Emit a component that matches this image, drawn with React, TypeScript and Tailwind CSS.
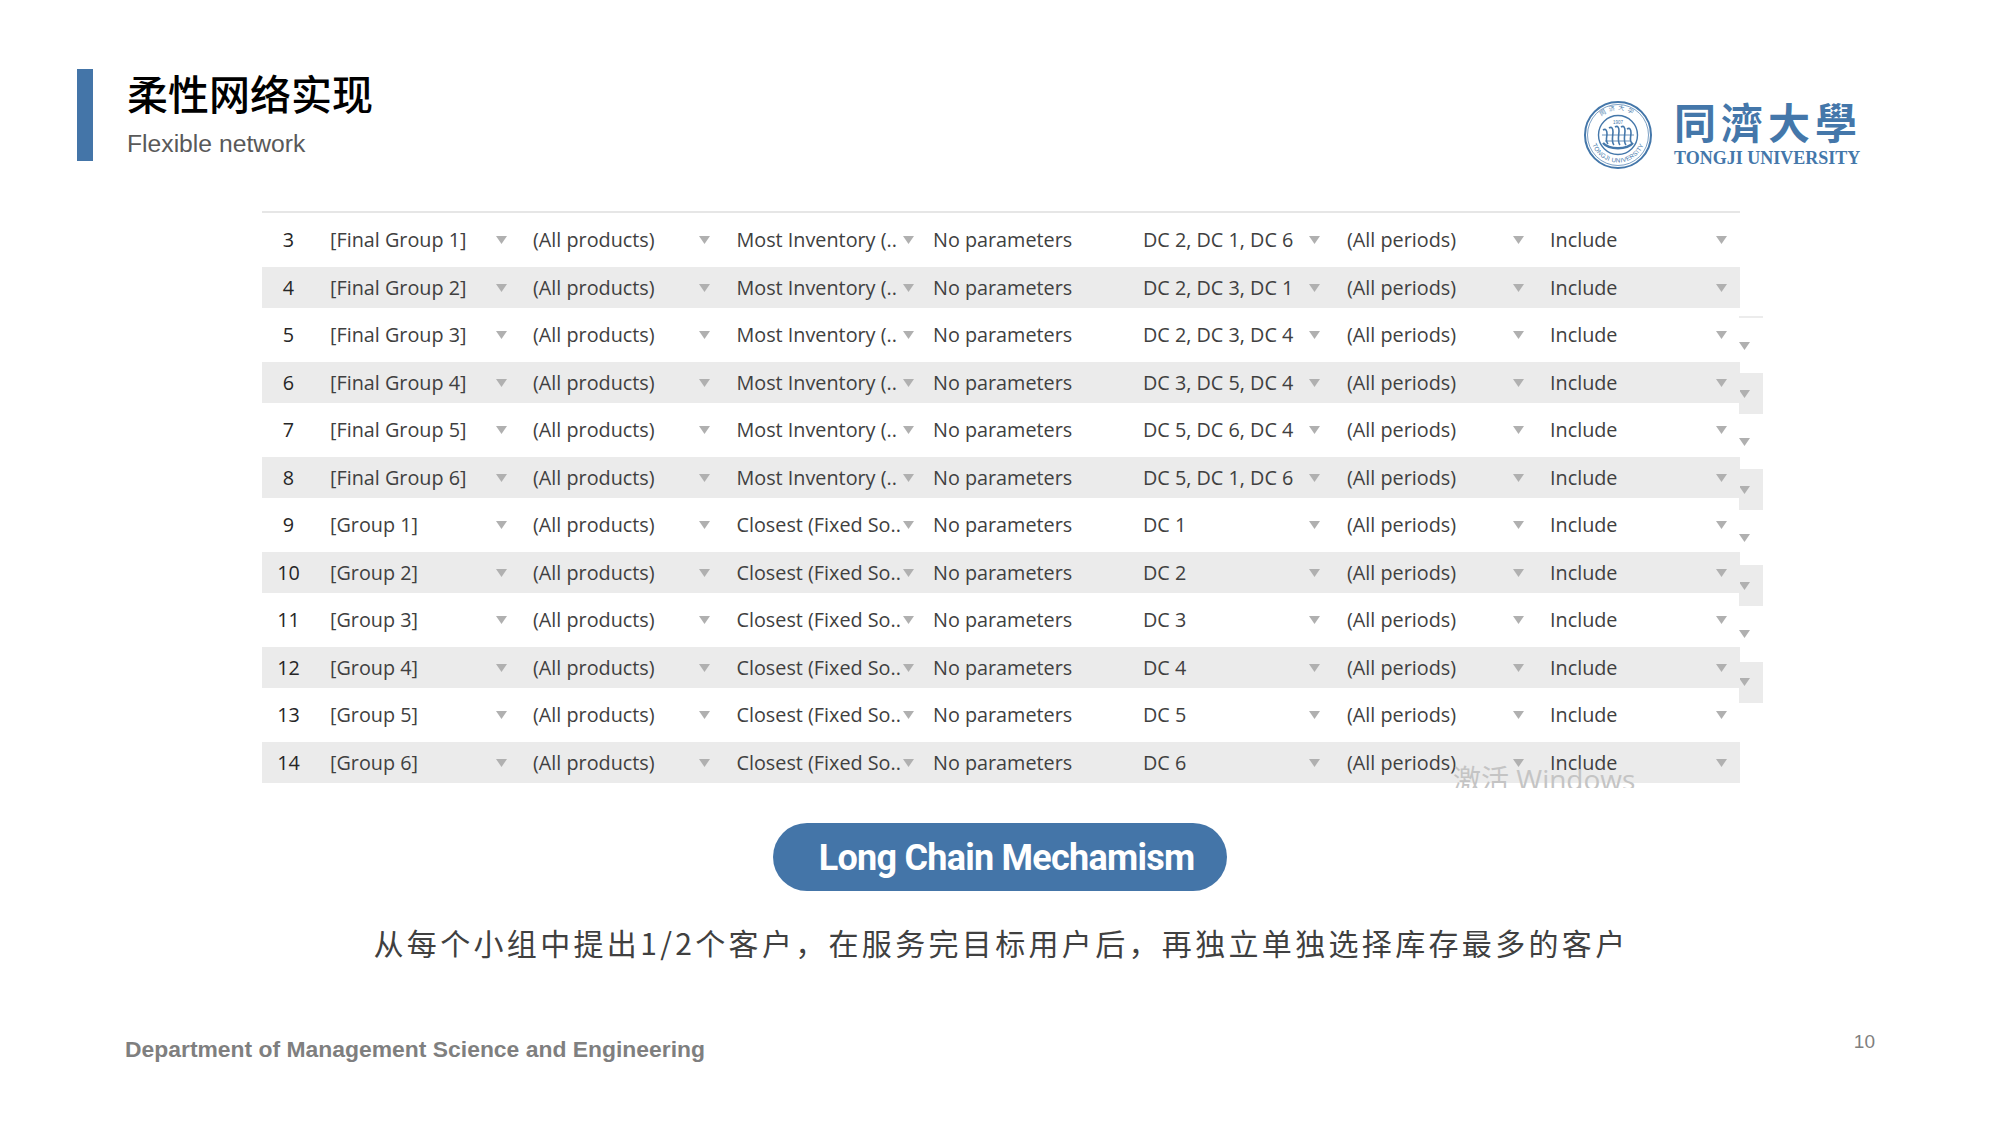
import React from 'react';

interface RowData {
  no: number;
  group: string;
  rule: string;
  sources: string;
}

const rows: RowData[] = [
  { no: 3, group: '[Final Group 1]', rule: 'Most Inventory (..', sources: 'DC 2, DC 1, DC 6' },
  { no: 4, group: '[Final Group 2]', rule: 'Most Inventory (..', sources: 'DC 2, DC 3, DC 1' },
  { no: 5, group: '[Final Group 3]', rule: 'Most Inventory (..', sources: 'DC 2, DC 3, DC 4' },
  { no: 6, group: '[Final Group 4]', rule: 'Most Inventory (..', sources: 'DC 3, DC 5, DC 4' },
  { no: 7, group: '[Final Group 5]', rule: 'Most Inventory (..', sources: 'DC 5, DC 6, DC 4' },
  { no: 8, group: '[Final Group 6]', rule: 'Most Inventory (..', sources: 'DC 5, DC 1, DC 6' },
  { no: 9, group: '[Group 1]', rule: 'Closest (Fixed So..', sources: 'DC 1' },
  { no: 10, group: '[Group 2]', rule: 'Closest (Fixed So..', sources: 'DC 2' },
  { no: 11, group: '[Group 3]', rule: 'Closest (Fixed So..', sources: 'DC 3' },
  { no: 12, group: '[Group 4]', rule: 'Closest (Fixed So..', sources: 'DC 4' },
  { no: 13, group: '[Group 5]', rule: 'Closest (Fixed So..', sources: 'DC 5' },
  { no: 14, group: '[Group 6]', rule: 'Closest (Fixed So..', sources: 'DC 6' },
];

const Arrow = () => (
  <svg width="11" height="8" viewBox="0 0 11 8" className="shrink-0">
    <polygon points="0,0 11,0 5.5,8" fill="#b0b0b0" />
  </svg>
);

const Cell = ({ text, pad }: { text: string; pad: string }) => (
  <div className={`flex items-center justify-between ${pad}`}>
    <span className="whitespace-nowrap">{text}</span>
    <Arrow />
  </div>
);

const Seal = () => (
  <svg width="70" height="70" viewBox="0 0 70 70" className="shrink-0">
    <defs>
      <path id="sealBottom" d="M7.5 35a27.5 27.5 0 0 0 55 0" />
      <path id="sealTop" d="M11 28a25 25 0 0 1 48 0" />
    </defs>
    <circle cx="35" cy="35" r="33" fill="none" stroke="#4477aa" strokeWidth="2" />
    <circle cx="35" cy="35" r="30.5" fill="none" stroke="#4477aa" strokeWidth="0.7" />
    <circle cx="35" cy="35" r="19.5" fill="none" stroke="#4477aa" strokeWidth="1.4" />
    <text fontSize="6.2" fill="#4477aa" fontFamily="'Liberation Sans', sans-serif" letterSpacing="0.3">
      <textPath href="#sealBottom" startOffset="50%" textAnchor="middle">TONGJI UNIVERSITY</textPath>
    </text>
    <text fontSize="6" fill="#4477aa" fontFamily="'Noto Sans CJK SC', sans-serif" letterSpacing="3">
      <textPath href="#sealTop" startOffset="50%" textAnchor="middle">同济大学</textPath>
    </text>
    <text x="35" y="24" textAnchor="middle" fontSize="4.5" fill="#4477aa" fontFamily="'Liberation Sans', sans-serif">1907</text>
    <g fill="none" stroke="#4477aa" strokeWidth="1.6">
      <path d="M20 30c3-2 4 1 4 4s-2 7 1 10" />
      <path d="M26 28c3-2 4 1 4 4s-2 10 1 13" />
      <path d="M32 27c3-2 4 1 4 4s-2 11 1 14" />
      <path d="M38 27c3-2 4 1 4 4s-2 11 1 14" />
      <path d="M44 29c3-2 4 1 4 4s-2 8 1 10" />
      <path d="M20 43c6 7 24 7 30 0" strokeWidth="2.4" />
      <path d="M19 35h32M22 41h26" strokeWidth="0.8" />
    </g>
  </svg>
);

const App: React.FC = () => {
  return (
    <div className="relative w-[2000px] h-[1125px] overflow-hidden bg-white font-['Liberation_Sans',sans-serif]">
      {/* header */}
      <div className="flex justify-between h-[211px] pt-[69px] pl-[77px] pr-[138px]">
        <div className="flex items-start">
          <div className="w-[16px] h-[92px] bg-[#4475a8]" />
          <div className="ml-[34px]">
            <h1 className="mt-[-3px] h-[52px] text-[41px] leading-[52px] text-black font-medium font-['Noto_Sans_CJK_SC',sans-serif]">
              柔性网络实现
            </h1>
            <p className="mt-[11px] text-[24.7px] leading-[30px] text-[#595959]">Flexible network</p>
          </div>
        </div>
        <div className="flex items-start pt-[31px]">
          <Seal />
          <div className="ml-[21px] mt-[-2px] text-[#4477aa]">
            <div className="h-[50px] text-[42px] leading-[46px] tracking-[5px] whitespace-nowrap font-bold font-['Noto_Sans_CJK_TC',sans-serif]">
              同濟大學
            </div>
            <div className="text-[18px] leading-[20px] font-bold whitespace-nowrap font-['Liberation_Serif',serif]">
              TONGJI UNIVERSITY
            </div>
          </div>
        </div>
      </div>

      {/* table behind the table: only its right edge shows */}
      <div className="absolute left-[1739px] top-[316px] w-[24px] border-t-2 border-[#ececec] pt-[7px]">
        {Array.from({ length: 8 }, (_, i) => (
          <div key={i} className="h-[48.1px]">
            <div className={`flex h-[41px] items-center ${i % 2 === 1 ? 'bg-[#ebebeb]' : ''}`}>
              <Arrow />
            </div>
          </div>
        ))}
      </div>

      {/* table */}
      <div className="relative ml-[262px] w-[1478px] border-t-2 border-[#e6e6e6] pt-[6.5px] text-[19.8px] text-[#404040] font-['Open_Sans',sans-serif]">
        {rows.map((row, i) => (
          <div key={row.no} className="h-[47.5px]">
            <div
              className={`grid h-[41px] grid-cols-[68px_203px_203.5px_196.5px_210px_204px_203px_190px] ${
                i % 2 === 1 ? 'bg-[#ebebeb]' : ''
              }`}
            >
              <div className="flex items-center justify-center pr-[15px] text-[#262626]">{row.no}</div>
              <Cell text={row.group} pad="pr-[26px]" />
              <Cell text="(All products)" pad="pr-[26.5px]" />
              <Cell text={row.rule} pad="pr-[19px]" />
              <div className="flex items-center whitespace-nowrap">No parameters</div>
              <Cell text={row.sources} pad="pr-[27px]" />
              <Cell text="(All periods)" pad="pr-[26px]" />
              <Cell text="Include" pad="pr-[13px]" />
            </div>
          </div>
        ))}
      </div>

      {/* activation watermark */}
      <div className="absolute left-[1453px] top-[761px] h-[27px] overflow-hidden text-[28px] leading-[36px] text-[#c4c4c4] whitespace-nowrap font-['Open_Sans','Noto_Sans_CJK_SC',sans-serif]">
        激活 Windows
      </div>

      <div className="flex flex-col items-center">
        <div className="mt-[33px] flex h-[68px] w-[454px] items-center justify-center rounded-full bg-[#4475a8] pl-[13px] pt-[3px] text-[36px] tracking-[-0.75px] font-bold text-white font-['Roboto',sans-serif]">
          Long Chain Mechamism
        </div>
        <p className="mt-[27px] pl-[2px] text-[30px] leading-[48px] tracking-[3.33px] text-[#404040] whitespace-nowrap font-['Noto_Sans_CJK_SC',sans-serif]">
          从每个小组中提出1/2个客户，在服务完目标用户后，再独立单独选择库存最多的客户
        </p>
      </div>

      {/* footer */}
      <div className="flex items-start justify-between pl-[125px] pr-[125px] pt-[67px]">
        <span className="text-[22.9px] leading-[32px] font-bold text-[#7f7f7f]">
          Department of Management Science and Engineering
        </span>
        <span className="mt-[-5px] text-[19px] leading-[28px] text-[#7f7f7f]">10</span>
      </div>
    </div>
  );
};

export default App;
